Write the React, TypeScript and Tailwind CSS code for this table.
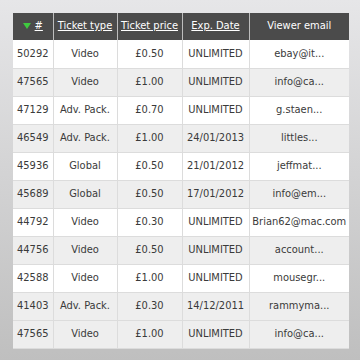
const rows = [
  ['50292', 'Video', '£0.50', 'UNLIMITED', 'ebay@it...'],
  ['47565', 'Video', '£1.00', 'UNLIMITED', 'info@ca...'],
  ['47129', 'Adv. Pack.', '£0.70', 'UNLIMITED', 'g.staen...'],
  ['46549', 'Adv. Pack.', '£1.00', '24/01/2013', 'littles...'],
  ['45936', 'Global', '£0.50', '21/01/2012', 'jeffmat...'],
  ['45689', 'Global', '£0.50', '17/01/2012', 'info@em...'],
  ['44792', 'Video', '£0.30', 'UNLIMITED', 'Brian62@mac.com'],
  ['44756', 'Video', '£0.50', 'UNLIMITED', 'account...'],
  ['42588', 'Video', '£1.00', 'UNLIMITED', 'mousegr...'],
  ['41403', 'Adv. Pack.', '£0.30', '14/12/2011', 'rammyma...'],
  ['47565', 'Video', '£1.00', 'UNLIMITED', 'info@ca...'],
];

export default function App() {
  return (
    <div
      className="w-[360px] h-[360px] bg-gradient-to-b from-[#e6e6e8] to-[#bfbfbf] pt-[13px] pl-[13px]"
      style={{ fontFamily: '"DejaVu Sans Condensed", "DejaVu Sans", sans-serif' }}
    >
      <table className="w-[336px] border-collapse table-fixed text-[11px] text-[#3a3a3a]">
        <colgroup>
          <col className="w-[40px]" />
          <col className="w-[64px]" />
          <col className="w-[65px]" />
          <col className="w-[67px]" />
          <col className="w-[100px]" />
        </colgroup>
        <thead>
          <tr className="h-[27px] bg-[#4b4b4b] text-white">
            <th className="font-normal border-r border-[#bdbdbd]">
              <span className="inline-flex items-center gap-[4px]">
                <svg width="8" height="6" viewBox="0 0 8 6">
                  <path d="M0 0H8L4 6Z" fill="#3fc93f" />
                </svg>
                <span className="underline">#</span>
              </span>
            </th>
            <th className="font-normal underline border-r border-[#bdbdbd]">Ticket type</th>
            <th className="font-normal underline border-r border-[#bdbdbd]">Ticket price</th>
            <th className="font-normal underline border-r border-[#bdbdbd]">Exp. Date</th>
            <th className="font-normal">Viewer email</th>
          </tr>
        </thead>
        <tbody>
          {rows.map((r, i) => (
            <tr
              key={i}
              className={`h-[28px] ${i % 2 === 1 || i === rows.length - 1 ? 'bg-[#eeeeee]' : 'bg-white'}`}
            >
              {r.map((c, j) => (
                <td
                  key={j}
                  className="text-center whitespace-nowrap overflow-hidden border border-[#dcdcdc] border-t-0 first:border-l-0 last:border-r-0 p-0"
                >
                  {c}
                </td>
              ))}
            </tr>
          ))}
        </tbody>
      </table>
    </div>
  );
}
